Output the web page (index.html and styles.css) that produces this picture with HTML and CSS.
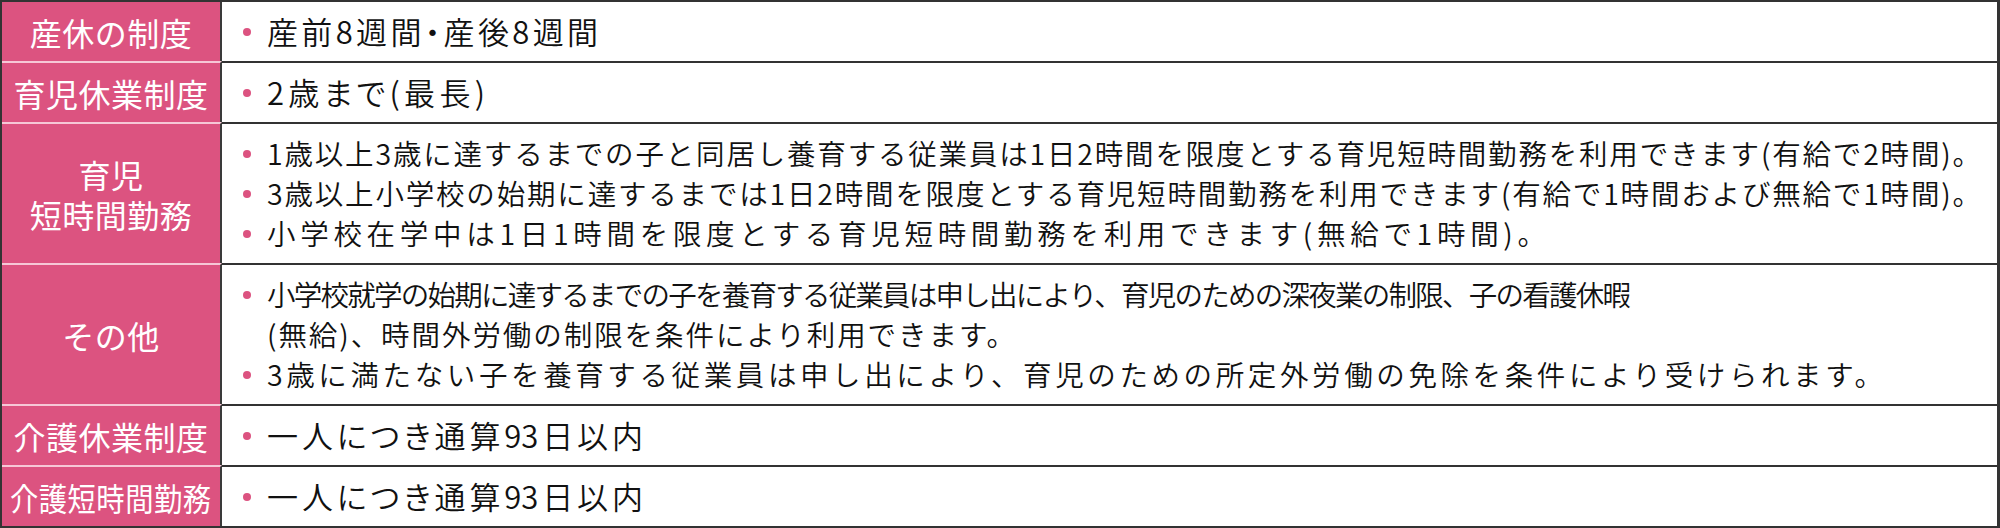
FILE: index.html
```html
<!DOCTYPE html>
<html lang="ja">
<head>
<meta charset="utf-8">
<title>制度一覧</title>
<link rel="stylesheet" href="styles.css">
</head>
<body>
<div class="table">
  <div class="row">
    <div class="head">産休の制度</div>
    <div class="body big">
      <ul class="list"><li><span class="ln w-r1">産前8週間・産後8週間</span></li></ul>
    </div>
  </div>
  <div class="row">
    <div class="head">育児休業制度</div>
    <div class="body big">
      <ul class="list"><li><span class="ln w-r2">2歳まで(最長)</span></li></ul>
    </div>
  </div>
  <div class="row">
    <div class="head">育児<br>短時間勤務</div>
    <div class="body">
      <ul class="list">
        <li><span class="ln w-r3a">1歳以上3歳に達するまでの子と同居し養育する従業員は1日2時間を限度とする育児短時間勤務を利用できます(有給で2時間)。</span></li>
        <li><span class="ln w-r3b">3歳以上小学校の始期に達するまでは1日2時間を限度とする育児短時間勤務を利用できます(有給で1時間および無給で1時間)。</span></li>
        <li><span class="ln w-r3c">小学校在学中は1日1時間を限度とする育児短時間勤務を利用できます(無給で1時間)。</span></li>
      </ul>
    </div>
  </div>
  <div class="row">
    <div class="head">その他</div>
    <div class="body">
      <ul class="list">
        <li><span class="ln w-r4a">小学校就学の始期に達するまでの子を養育する従業員は申し出により、育児のための深夜業の制限、子の看護休暇</span><span class="ln w-r4b">(無給)、時間外労働の制限を条件により利用できます。</span></li>
        <li><span class="ln w-r4c">3歳に満たない子を養育する従業員は申し出により、育児のための所定外労働の免除を条件により受けられます。</span></li>
      </ul>
    </div>
  </div>
  <div class="row">
    <div class="head">介護休業制度</div>
    <div class="body big">
      <ul class="list"><li><span class="ln w-r5">一人につき通算93日以内</span></li></ul>
    </div>
  </div>
  <div class="row">
    <div class="head"><span class="condensed">介護短時間勤務</span></div>
    <div class="body big">
      <ul class="list"><li><span class="ln w-r5">一人につき通算93日以内</span></li></ul>
    </div>
  </div>
</div>
</body>
</html>
```

FILE: styles.css
```css
html, body {
  margin: 0;
  padding: 0;
  background: #ffffff;
}

.table {
  width: 2000px;
  height: 528px;
  box-sizing: border-box;
  border: 2px solid #333333;
  border-right-width: 3px;
  display: flex;
  flex-direction: column;
  font-family: "Noto Sans CJK JP", "Noto Sans", sans-serif;
}

.row {
  display: grid;
  grid-template-columns: 220px 1fr;
}

.row + .row .head {
  border-top: 2px solid #f6c7d6;
}

.row + .row .body {
  border-top: 2px solid #333333;
}

.head {
  box-sizing: border-box;
  background: #dc5380;
  color: #ffffff;
  border-right: 2px solid #3a3a3a;
  display: flex;
  align-items: center;
  justify-content: center;
  text-align: center;
  font-size: 32px;
  line-height: 40px;
  font-weight: 400;
  letter-spacing: 0.5px;
  overflow: hidden;
}

.condensed {
  display: inline-block;
  white-space: nowrap;
  transform: scaleX(0.885);
  transform-origin: center;
}

.body {
  padding: 9px 0 10px 0;
  color: #111111;
  font-size: 28.5px;
  line-height: 40px;
  font-weight: 350;
}

.body.big {
  font-size: 31px;
  font-feature-settings: "palt" 1;
}

.list {
  list-style: none;
  margin: 0;
  padding: 0 0 0 45px;
}

.list li {
  position: relative;
}

.list li::before {
  content: "";
  position: absolute;
  left: -24px;
  top: 17px;
  width: 8px;
  height: 8px;
  border-radius: 50%;
  background: #dc5380;
}

.ln {
  display: block;
  text-align: justify;
  text-align-last: justify;
}

.w-r1 { width: 331px; }
.w-r2 { width: 218px; }
.w-r3a { width: 1714px; }
.w-r3b { width: 1714px; }
.w-r3c { width: 1279px; }
.w-r4a { width: 1362px; letter-spacing: -2px; }
.w-r4b { width: 748px; }
.w-r4c { width: 1616px; }
.w-r5 { width: 376px; }
```
